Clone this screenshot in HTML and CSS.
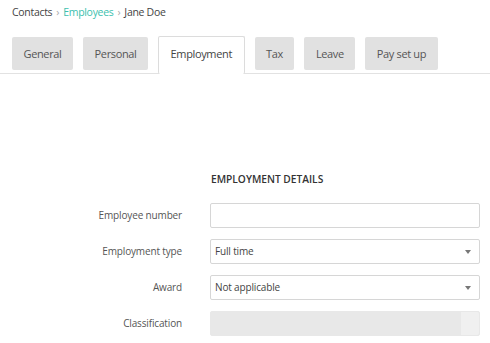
FILE: index.html
```html
<!DOCTYPE html>
<html>
<head>
<meta charset="utf-8">
<link rel="stylesheet" href="styles.css">
</head>
<body>
<nav class="crumbs">
  <span>Contacts</span><span class="sep">›</span><span class="link">Employees</span><span class="sep">›</span><span>Jane Doe</span>
</nav>
<div class="tabs">
  <div class="tab">General</div>
  <div class="tab">Personal</div>
  <div class="tab active">Employment</div>
  <div class="tab">Tax</div>
  <div class="tab">Leave</div>
  <div class="tab">Pay set up</div>
</div>
<div class="form">
  <div class="heading">EMPLOYMENT DETAILS</div>
  <label class="label">Employee number</label>
  <div class="field"></div>
  <label class="label">Employment type</label>
  <div class="field select">Full time<span class="arrow"></span></div>
  <label class="label">Award</label>
  <div class="field select">Not applicable<span class="arrow"></span></div>
  <label class="label">Classification</label>
  <div class="field disabled"><span class="btn"></span></div>
</div>
</body>
</html>
```
FILE: styles.css
```css
* { box-sizing: border-box; }
body {
  margin: 0;
  font-family: "Open Sans", "DejaVu Sans", sans-serif;
  color: #444;
  background: #fff;
}
.crumbs {
  padding: 4px 12px 16px;
  font-size: 10.5px;
  letter-spacing: -0.3px;
  line-height: 16px;
  height: 36px;
  color: #444;
}
.crumbs .sep {
  color: #aaa;
  margin: 0 4px;
}
.crumbs .link { color: #3cbfae; }
.tabs {
  display: flex;
  align-items: flex-start;
  gap: 10px;
  padding-left: 12px;
  height: 38px;
  border-bottom: 1px solid #e2e2e2;
}
.tab {
  height: 33px;
  margin-top: 1px;
  padding: 0 11.5px;
  background: #e1e1e1;
  border-radius: 2px;
  font-size: 11px;
  letter-spacing: -0.35px;
  line-height: 33px;
  color: #555;
}
.tab.active {
  height: 38px;
  margin-top: 0;
  background: #fff;
  border: 1px solid #dcdcdc;
  border-bottom: none;
  line-height: 34px;
  color: #444;
}
.form {
  display: grid;
  grid-template-columns: 182px 270px;
  column-gap: 28px;
  row-gap: 11px;
  margin-top: 97px;
}
.heading {
  grid-column: 2;
  font-size: 10.2px;
  font-weight: 600;
  line-height: 16px;
  color: #333;
  padding-left: 1px;
  margin-bottom: 5px;
}
.label {
  grid-column: 1;
  text-align: right;
  font-size: 10px;
  letter-spacing: -0.15px;
  line-height: 25px;
  color: #555;
}
.field {
  grid-column: 2;
  height: 25px;
  border: 1px solid #d6d6d6;
  border-radius: 2px;
  font-size: 10px;
  letter-spacing: -0.15px;
  line-height: 23px;
  padding-left: 4px;
  color: #444;
  position: relative;
}
.arrow {
  position: absolute;
  right: 8px;
  top: 10px;
  width: 0;
  height: 0;
  border-left: 3px solid transparent;
  border-right: 3px solid transparent;
  border-top: 4px solid #777;
}
.field.disabled {
  background: #e8e8e8;
  border-color: #e8e8e8;
  display: flex;
  justify-content: flex-end;
  padding: 0;
}
.btn {
  width: 18px;
  height: 100%;
  background: #f0f0f0;
  border-radius: 0 2px 2px 0;
}
```
